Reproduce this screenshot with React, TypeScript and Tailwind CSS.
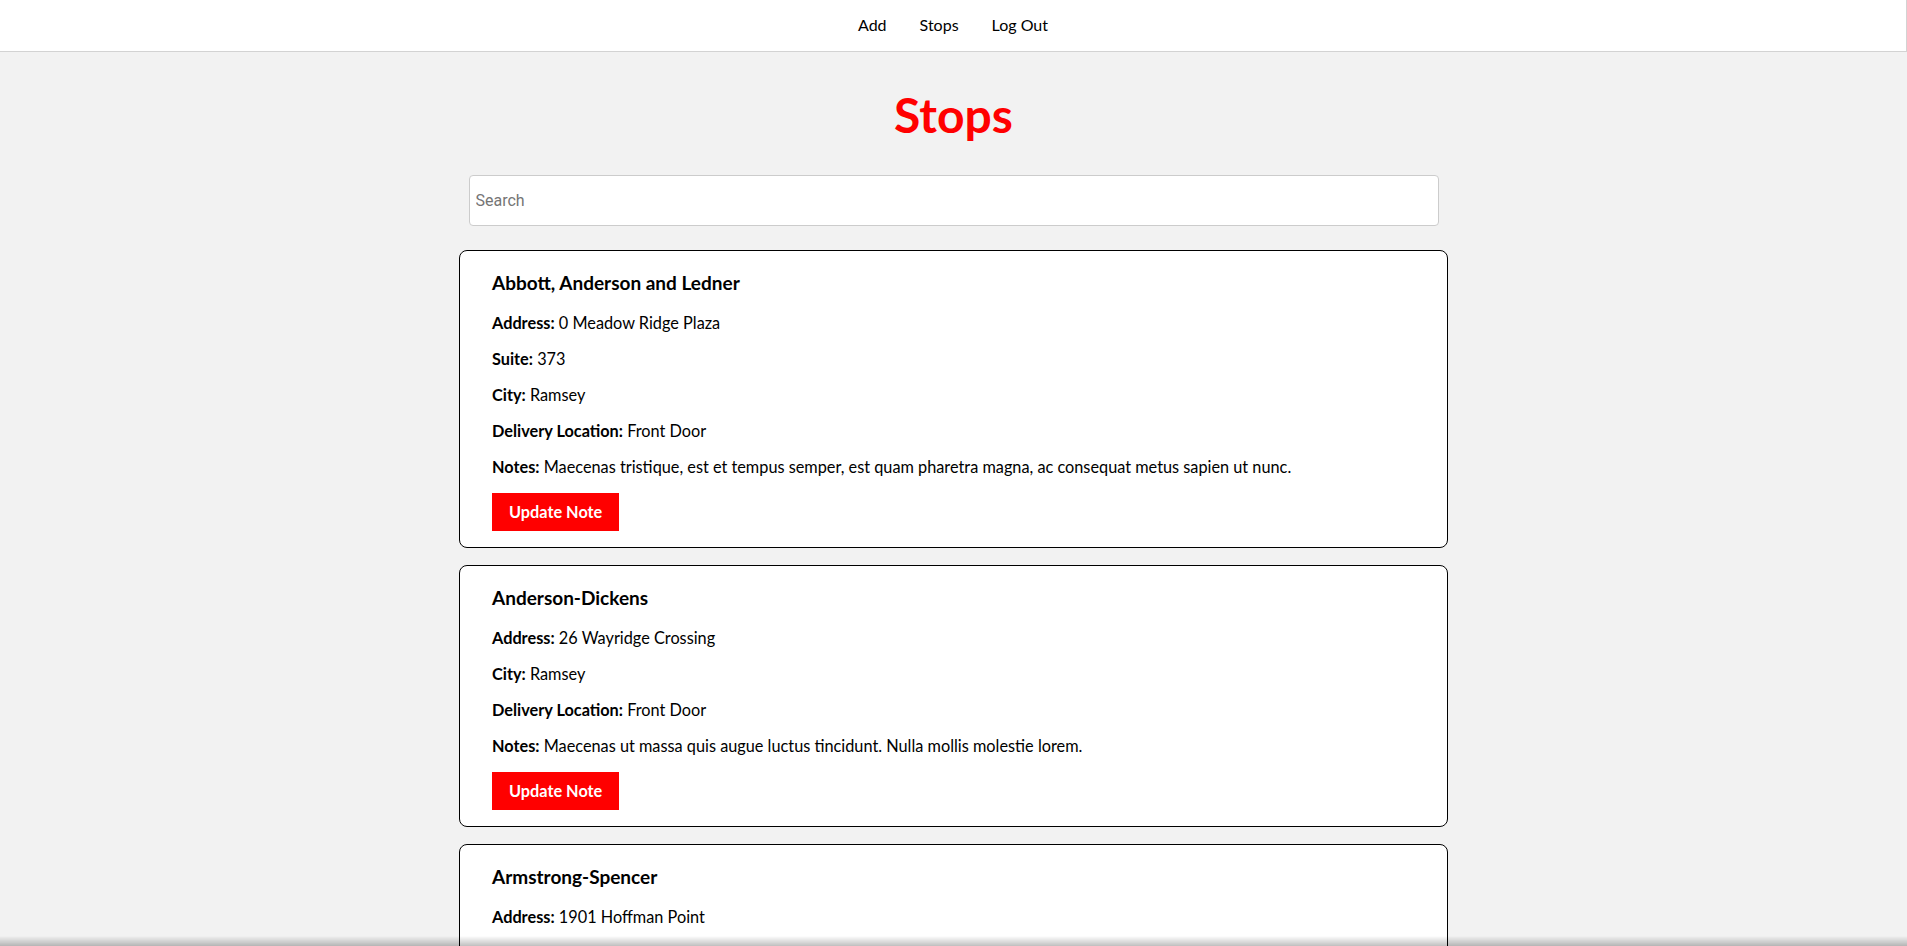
import React from 'react';

interface Stop {
  name: string;
  address: string;
  suite?: string;
  city: string;
  location: string;
  notes: string;
}

const stops: Stop[] = [
  {
    name: 'Abbott, Anderson and Ledner',
    address: '0 Meadow Ridge Plaza',
    suite: '373',
    city: 'Ramsey',
    location: 'Front Door',
    notes: 'Maecenas tristique, est et tempus semper, est quam pharetra magna, ac consequat metus sapien ut nunc.',
  },
  {
    name: 'Anderson-Dickens',
    address: '26 Wayridge Crossing',
    city: 'Ramsey',
    location: 'Front Door',
    notes: 'Maecenas ut massa quis augue luctus tincidunt. Nulla mollis molestie lorem.',
  },
  {
    name: 'Armstrong-Spencer',
    address: '1901 Hoffman Point',
    suite: '388',
    city: 'Ramsey',
    location: 'Side Door',
    notes: 'Integer ac leo. Pellentesque ultrices mattis odio.',
  },
];

function Field({ label, value }: { label: string; value: string }) {
  return (
    <p className="h-[24px] leading-[24px]">
      <span className="font-bold">{label}:</span> {value}
    </p>
  );
}

function StopCard({ stop }: { stop: Stop }) {
  return (
    <div className="bg-white border border-black rounded-[8px] px-[32px] pt-[20px] pb-[16px] mb-[17px]">
      <h3 className="text-[19px] font-bold leading-[24px] mb-[16px]">{stop.name}</h3>
      <div className="flex flex-col gap-[12px] text-[16.3px]">
        <Field label="Address" value={stop.address} />
        {stop.suite && <Field label="Suite" value={stop.suite} />}
        <Field label="City" value={stop.city} />
        <Field label="Delivery Location" value={stop.location} />
        <Field label="Notes" value={stop.notes} />
      </div>
      <button className="block mt-[14px] h-[38px] px-[17px] bg-[#ff0000] text-white font-bold text-[16.3px] leading-[38px]">
        Update Note
      </button>
    </div>
  );
}

export default function App() {
  return (
    <div className="min-h-screen bg-[#f2f2f2] text-black font-['Lato',sans-serif]">
      <nav className="h-[52px] bg-white border-b border-r border-[#d3d3d3] flex items-center justify-center gap-[33px] text-[16px] pb-[1px]">
        <a href="#">Add</a>
        <a href="#">Stops</a>
        <a href="#">Log Out</a>
      </nav>

      <main className="w-[989px] mx-auto">
        <h1 className="mt-[38px] h-[50px] leading-[50px] text-center text-[#ff0000] font-bold text-[48px]">Stops</h1>

        <input
          type="text"
          placeholder="Search"
          className="block mt-[35px] mx-auto w-[970px] h-[51px] bg-white border border-[#ccc] rounded-[4px] px-[6px] text-[16px] font-['Roboto',sans-serif] placeholder:text-[#757575] outline-none"
        />

        <div className="mt-[24px]">
          {stops.map((s) => (
            <StopCard key={s.name} stop={s} />
          ))}
        </div>
      </main>

      <div className="fixed bottom-0 inset-x-0 h-[10px] bg-linear-to-b from-transparent to-black/25 pointer-events-none" />
    </div>
  );
}
